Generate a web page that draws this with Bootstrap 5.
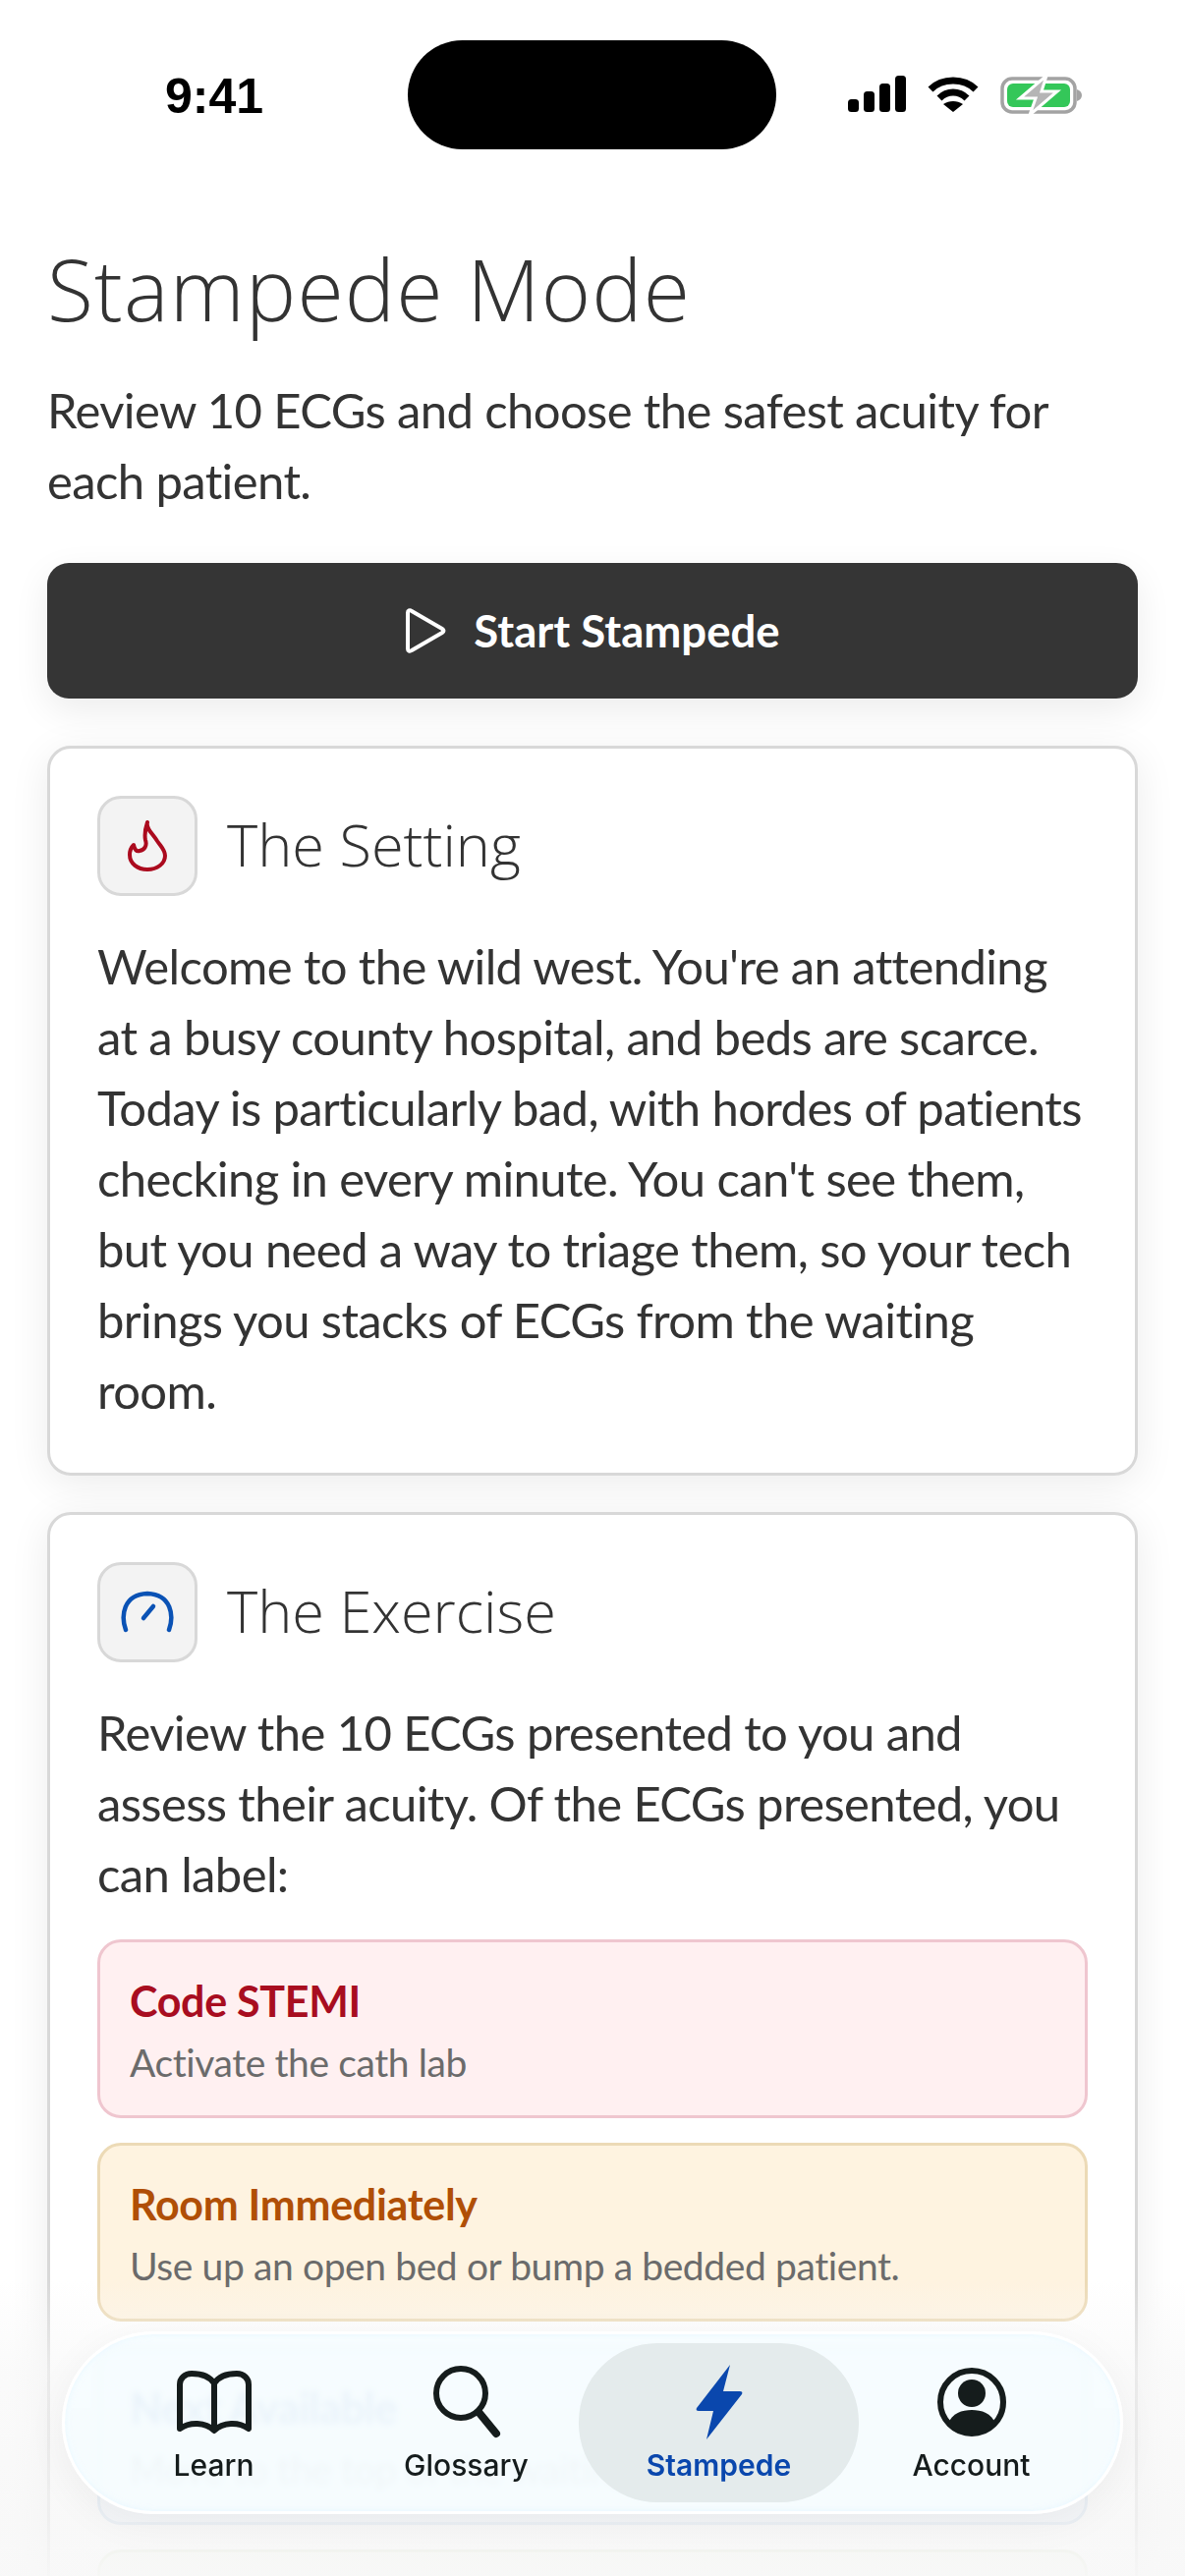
<!DOCTYPE html>
<html lang="en">

<head>
    <meta charset="UTF-8">
    <meta name="viewport" content="width=device-width, initial-scale=1">
    <title>Stampede Mode</title>
    <link href="https://cdn.jsdelivr.net/npm/bootstrap@5.3.3/dist/css/bootstrap.min.css" rel="stylesheet">
    <style>
        html,
        body {
            height: 2622px;
            overflow: hidden;
        }

        body {
            background: #fff;
            color: #333;
            font-family: "Lato", sans-serif;
            position: relative;
        }

        .status-bar {
            height: 152px;
            padding: 41px 0 0 168px;
        }

        .status-time {
            font-family: "Liberation Sans", sans-serif;
            font-weight: 700;
            font-size: 50px;
            line-height: 1;
            width: 247px;
            padding-top: 32px;
            color: #000;
        }

        .island {
            width: 375px;
            height: 111px;
            background: #000;
            border-radius: 56px;
        }

        .status-icons {
            margin-left: 72px;
            gap: 22px;
            padding-top: 36px;
        }

        .page-body {
            padding: 92px 48px 0;
        }

        .page-title {
            font-family: "Open Sans", sans-serif;
            font-weight: 300;
            font-size: 86px;
            letter-spacing: 1.2px;
            line-height: 100px;
            margin: 0 0 37px;
            color: #333;
        }

        .page-desc {
            font-size: 49px;
            letter-spacing: -.62px;
            line-height: 72px;
            margin: 0 0 48px;
        }

        .start-btn {
            height: 138px;
            background: #353535;
            border: 0;
            border-radius: 22px;
            color: #fff;
            font-size: 45.5px;
            font-weight: 700;
            gap: 28px;
            box-shadow: 0 12px 36px rgba(0, 0, 0, .08);
            margin-bottom: 48px;
        }

        .start-btn:hover {
            background: #353535;
            color: #fff;
        }

        .info-card {
            border: 3px solid #d8d8d8;
            border-radius: 24px;
            padding: 48px;
            margin-bottom: 37px;
            box-shadow: 0 8px 40px rgba(0, 0, 0, .08);
            --bs-card-bg: #fff;
        }

        .icon-box {
            width: 102px;
            height: 102px;
            background: #f3f3f3;
            border: 3px solid #d8d8d8;
            border-radius: 24px;
            flex-shrink: 0;
            margin-right: 6px;
        }

        .card-heading {
            font-family: "Open Sans", sans-serif;
            font-weight: 300;
            font-size: 59.5px;
            margin: 0;
            padding-bottom: 4px;
            color: #333;
        }

        .card-copy {
            font-size: 49px;
            letter-spacing: -.62px;
            line-height: 72px;
            margin: 35px 0 0;
        }

        .acuity-list {
            margin-top: 31px;
            gap: 25px;
        }

        .acuity-item {
            height: 182px;
            border: 3px solid;
            border-radius: 24px;
            padding: 32px 30px 0;
        }

        .acuity-item h6 {
            font-family: "Lato", sans-serif;
            font-weight: 700;
            font-size: 43px;
            letter-spacing: -.3px;
            line-height: 56px;
            margin: 0;
        }

        .acuity-item p {
            font-size: 39px;
            letter-spacing: -.4px;
            line-height: 56px;
            margin: 6px 0 0;
            color: #6b6b6b;
        }

        .acuity-red {
            background: #fff0f1;
            border-color: #efc6cf;
        }

        .acuity-red h6 {
            color: #a80d20;
        }

        .acuity-orange {
            background: #fef3e0;
            border-color: #ecdab6;
        }

        .acuity-orange h6 {
            color: #b04f06;
        }

        .acuity-blue {
            background: #eff6ff;
            border-color: #c8dcf0;
        }

        .acuity-blue h6 {
            color: #0a49ad;
        }

        .acuity-green {
            background: #f1f7ea;
            border-color: #d7e4c4;
        }

        .bottom-fog {
            position: absolute;
            left: 0;
            right: 0;
            bottom: 0;
            height: 300px;
            background: linear-gradient(to bottom, rgba(247, 247, 247, 0), rgba(247, 247, 247, .6) 30%, rgba(246, 246, 246, .75) 80%, rgba(248, 248, 248, .94));
        }

        .tab-bar {
            position: absolute;
            left: 63px;
            top: 2373px;
            width: 1080px;
            height: 186px;
            border-radius: 93px;
            border: 3px solid rgba(255, 255, 255, .95);
            background: rgba(246, 253, 255, .86);
            backdrop-filter: blur(3px);
            padding: 9px 0;
            box-shadow: inset 0 0 6px rgba(200, 235, 255, .35), 0 10px 40px rgba(0, 0, 0, .05);
        }

        .tab-link {
            width: 257px;
            height: 162px;
            padding-top: 22px;
            color: #151c1c;
            font-family: "Inter", sans-serif;
            font-weight: 500;
            font-size: 30px;
            text-decoration: none;
            border-radius: 80px;
        }

        .tab-link svg {
            height: 76px;
            margin-bottom: 4px;
            flex-shrink: 0;
        }

        .tab-link.active-tab {
            width: 285px;
            margin: 0 -14px;
            background: #e4ebec;
            color: #0a47ad;
            font-weight: 600;
        }
    </style>
</head>

<body>
    <div class="status-bar d-flex">
        <div class="status-time">9:41</div>
        <div class="island"></div>
        <div class="status-icons d-flex align-items-start">
            <svg width="60" height="38" viewBox="0 0 60 38">
                <rect x="1" y="24" width="11" height="13" rx="3.5" />
                <rect x="17" y="16" width="11" height="21" rx="3.5" />
                <rect x="33" y="8" width="11" height="29" rx="3.5" />
                <rect x="49" y="0" width="11" height="37" rx="3.5" />
            </svg>
            <svg width="52" height="38" viewBox="0 0 52 38" fill="none" stroke="#000" stroke-width="7">
                <path d="M3 14C15 2 37 2 49 14" />
                <path d="M12 23C20 15 32 15 40 23" />
                <path d="M26 37L16 29C22 25 30 25 36 29Z" fill="#000" stroke="none" />
            </svg>
            <svg width="84" height="40" viewBox="0 0 84 40">
                <rect x="2" y="3" width="74" height="34" rx="10" fill="none" stroke="#a3a3a3" stroke-width="3.5" />
                <rect x="7" y="8" width="64" height="24" rx="6" fill="#34c759" />
                <path d="M78 14c3 1 5 3 5 6s-2 5-5 6z" fill="#a3a3a3" />
                <path d="M47 0L20 23H36L30 40L58 16H42Z" fill="#b5b5b5" stroke="#fff" stroke-width="3" />
            </svg>
        </div>
    </div>

    <main class="page-body">
        <h1 class="page-title">Stampede Mode</h1>
        <p class="page-desc">Review 10 ECGs and choose the safest acuity for each patient.</p>

        <button type="button" class="btn start-btn w-100 d-flex align-items-center justify-content-center">
            <svg width="42" height="46" viewBox="0 0 42 46" fill="none" stroke="#fff" stroke-width="4" stroke-linejoin="round">
                <path d="M3 4.500C3 2.500 5 1.500 7 3L38 21C40 22.300 40 23.700 38 25L7 43C5 44.500 3 43.500 3 41.500Z" />
            </svg>
            Start Stampede
        </button>

        <section class="card info-card">
            <div class="d-flex align-items-center gap-4">
                <div class="icon-box d-flex align-items-center justify-content-center">
                    <svg width="40" height="52" viewBox="0 0 40 52" fill="none" stroke="#ab0a1e" stroke-width="4" stroke-linejoin="round">
                        <path d="M20 2C18 8 25 13 30 21C34 27 38 30 38 36C38 44 30 50 20 50C10 50 2 44 2 35C2 31 3 28 6 25C7 30 9 32 12 31C17 30 20 26 18 20C17 15 18 8 20 2Z" />
                    </svg>
                </div>
                <h2 class="card-heading">The Setting</h2>
            </div>
            <p class="card-copy">Welcome to the wild west. You're an attending at a busy county hospital, and beds are scarce. Today is particularly bad, with hordes of patients checking in every minute. You can't see them, but you need a way to triage them, so your tech brings you stacks of ECGs from the waiting room.</p>
        </section>

        <section class="card info-card">
            <div class="d-flex align-items-center gap-4">
                <div class="icon-box d-flex align-items-center justify-content-center">
                    <svg width="56" height="44" viewBox="0 0 56 44" fill="none" stroke="#0a52b5" stroke-width="4.500" stroke-linecap="round">
                        <path d="M6 40C1 26 3 4 28 3C53 4 55 26 50 40" />
                        <path d="M24 28L34 16" />
                    </svg>
                </div>
                <h2 class="card-heading">The Exercise</h2>
            </div>
            <p class="card-copy">Review the 10 ECGs presented to you and assess their acuity. Of the ECGs presented, you can label:</p>
            <div class="acuity-list d-flex flex-column">
                <div class="acuity-item acuity-red">
                    <h6>Code STEMI</h6>
                    <p>Activate the cath lab</p>
                </div>
                <div class="acuity-item acuity-orange">
                    <h6>Room Immediately</h6>
                    <p>Use up an open bed or bump a bedded patient.</p>
                </div>
                <div class="acuity-item acuity-blue">
                    <h6>Next Available</h6>
                    <p>Move to the top of the waiting room.</p>
                </div>
                <div class="acuity-item acuity-green"></div>
            </div>
        </section>
    </main>

    <div class="bottom-fog"></div>

    <nav class="tab-bar d-flex justify-content-center">
        <a href="#" class="tab-link d-flex flex-column align-items-center">
            <svg width="76" height="64" viewBox="0 0 76 64" fill="none" stroke="#151c1c" stroke-width="6" stroke-linejoin="round">
                <path d="M38 13C33 5 24 3 15 3C8 3 3 8 3 14V59C13 52 29 52 38 61C47 52 63 52 73 59V14C73 8 68 3 61 3C52 3 43 5 38 13Z" />
                <path d="M38 13V61" />
            </svg>
            Learn
        </a>
        <a href="#" class="tab-link d-flex flex-column align-items-center">
            <svg width="70" height="76" viewBox="0 0 70 76" fill="none" stroke="#151c1c" stroke-width="6" stroke-linecap="round">
                <circle cx="29" cy="29" r="25" />
                <path d="M47 48L65 70" stroke-width="8" />
            </svg>
            Glossary
        </a>
        <a href="#" class="tab-link active-tab d-flex flex-column align-items-center">
            <svg width="50" height="76" viewBox="0 0 50 76" fill="#0a47ad">
                <path d="M36 0L2 44C1 46 2 47 4 47H19L12 76L48 30C49 28 48 27 46 27H29Z" />
            </svg>
            Stampede
        </a>
        <a href="#" class="tab-link d-flex flex-column align-items-center">
            <svg width="72" height="76" viewBox="0 0 72 72" fill="none">
                <circle cx="36" cy="36" r="32" stroke="#151c1c" stroke-width="6" />
                <circle cx="36" cy="27" r="14" fill="#151c1c" />
                <path d="M12 58C16 47 26 44 36 44C46 44 56 47 60 58C54 65 45 68 36 68C27 68 18 65 12 58Z" fill="#151c1c" />
            </svg>
            Account
        </a>
    </nav>

    <script src="https://cdn.jsdelivr.net/npm/bootstrap@5.3.3/dist/js/bootstrap.bundle.min.js"></script>
</body>

</html>
